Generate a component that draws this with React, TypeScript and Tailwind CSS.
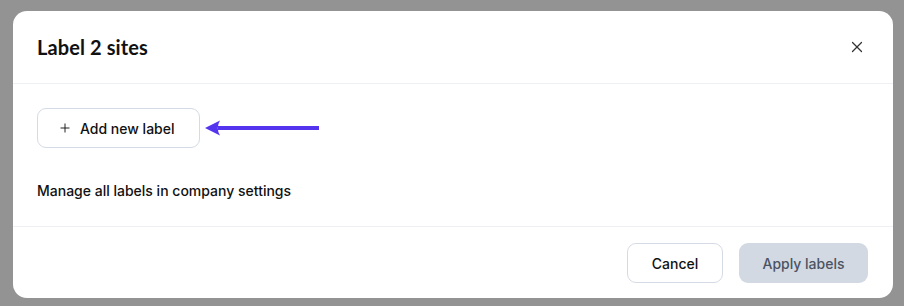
import { X, Plus } from 'lucide-react'

function Arrow() {
  return (
    <svg width="116" height="18" viewBox="0 0 116 18" className="ml-[5px]">
      <path d="M13 7 H114 V11 H13 Z" fill="#5534f0" />
      <path d="M0 9 L15 1.5 Q10.5 9 15 16.5 Z" fill="#5534f0" />
    </svg>
  )
}

export default function App() {
  return (
    <div className="w-[904px] h-[306px] bg-[#939393] pt-[11px] pl-[13px]" style={{ fontFamily: 'Inter, "Noto Sans", sans-serif' }}>
      <div className="w-[880px] h-[287px] bg-white rounded-[14px] flex flex-col">
        {/* Header */}
        <div className="h-[73px] flex items-center justify-between pl-6 pr-[27px] border-b border-[#eef0f3]">
          <h2 className="text-[20px] font-bold text-[#111] tracking-[0.1px]" style={{ fontFamily: 'Lato, sans-serif' }}>Label 2 sites</h2>
          <X size={18} strokeWidth={1.6} className="text-[#333]" />
        </div>

        {/* Body */}
        <div className="h-[143px] px-6 pt-[24px] border-b border-[#eef0f3]">
          <div className="flex items-center">
            <button className="h-10 w-[163px] flex items-center pl-[20px] gap-[8px] border border-[#d5dbe5] rounded-[9px] text-[14px] font-medium text-[#111]">
              <Plus size={14} strokeWidth={1.6} />
              <span>Add new label</span>
            </button>
            <Arrow />
          </div>
          <p className="mt-[32px] text-[14px] font-medium text-[#111]">Manage all labels in company settings</p>
        </div>

        {/* Footer */}
        <div className="flex-1 flex items-start justify-end gap-4 pr-[25px] pt-[16px]">
          <button className="h-10 w-[96px] border border-[#d5dbe5] rounded-[9px] text-[14px] font-medium text-[#111]">Cancel</button>
          <button className="h-10 w-[129px] bg-[#d2d9e3] rounded-[9px] text-[14px] font-medium text-[#4b5362]">Apply labels</button>
        </div>
      </div>
    </div>
  )
}
